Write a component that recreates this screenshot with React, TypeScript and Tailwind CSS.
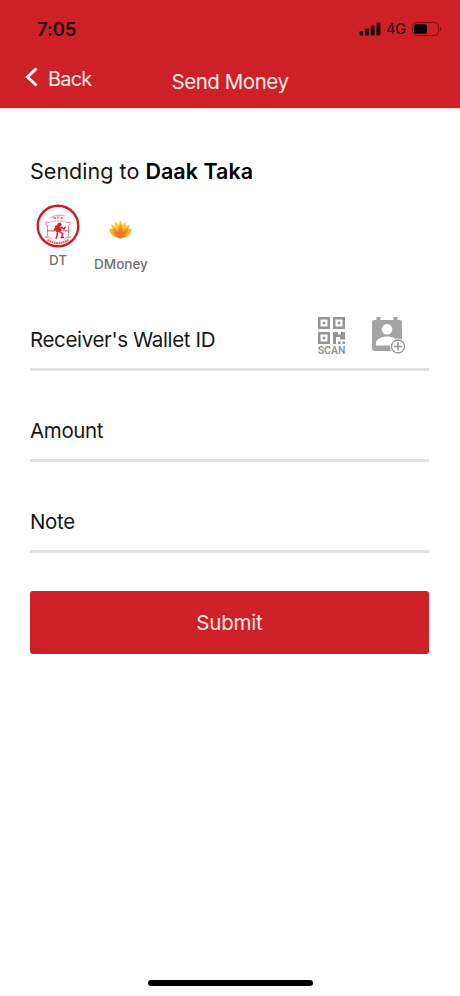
import type { ReactNode } from "react";

function StatusBar() {
  return (
    <div className="flex h-[57px] items-center pr-[18px] pl-[37px] text-[#240406]">
      <span className="text-[18.5px] leading-6 font-semibold tracking-[-0.1px]">7:05</span>
      <svg className="ml-auto" width="22" height="14" viewBox="0 0 22 14" fill="currentColor">
        <rect x="0.5" y="9" width="3.8" height="4.5" rx="1" />
        <rect x="6" y="6.5" width="4" height="7" rx="1" />
        <rect x="11.7" y="3.5" width="4" height="10" rx="1" />
        <rect x="17.4" y="0.5" width="4" height="13" rx="1" />
      </svg>
      <span className="ml-[5px] text-[14.5px] leading-6 tracking-[-0.1px]">4G</span>
      <svg className="ml-[6px]" width="30" height="14" viewBox="0 0 30 14">
        <rect x="0.5" y="0.5" width="26" height="13" rx="4" fill="none" stroke="#7d1014" />
        <rect x="2" y="2.2" width="13" height="9.6" rx="2" fill="#0d0001" />
        <path d="M28 4.8c1.7.8 1.7 3.6 0 4.4z" fill="#7d1014" />
      </svg>
    </div>
  );
}

function DaakTakaLogo() {
  return (
    <svg width="44" height="44" viewBox="0 0 44 44" fill="none" stroke="#d3232b">
      <circle cx="22" cy="22" r="20.3" strokeWidth="2.4" stroke="#c91f2b" />
      <path d="M14.500 14q6-4.500 14.500-2" strokeWidth="1.2" opacity=".4" />
      <path d="M17.500 14h2.500M21 13.500h2.500M24.500 14h2.500" strokeWidth="2" opacity=".55" />
      <path d="M15.500 17.800q6.500-1.500 13 0" strokeWidth="1" strokeDasharray="2 .8" opacity=".55" />
      <path d="M10 17.500v3l1.500 1M34 17.500v3l-1.500 1M10.500 18.500l4-.5M33.500 18.500l-4-.5" strokeWidth="1" opacity=".55" />
      <path d="M11.500 21v11M32.500 21v11M11.500 32l4 3.500M32.500 32l-4 3.500" strokeWidth="1" opacity=".5" />
      <path d="M11 26.800h8M26.500 26.800h6.500" strokeWidth="1.200" opacity=".65" />
      <path d="M9.500 32.500l3 1.500M34.500 32.500l-3 1.500" strokeWidth="1.300" opacity=".6" />
      <path d="M11.500 36q10.500 6 21 0" strokeWidth="2.200" strokeDasharray="1.700 .6" opacity=".75" />
      <circle cx="23.500" cy="20.500" r="2" fill="#d3232b" stroke="none" />
      <path d="M19 22l3-1.300 3.200 2.800.3 3.500-4.300 1.800-2.200-2.800z" fill="#d3232b" stroke="none" />
      <path d="M19.700 23l-1.500 3.500M24.800 23l3.200 2 1.500-2.300M21.700 27.500l-.7 4-1 3M23.800 27.500l3 2.500-1.300 3.500h2.500" strokeWidth="1.500" />
    </svg>
  );
}

function DMoneyLogo() {
  return (
    <svg width="23" height="19" viewBox="0 0 23 19">
      <g fill="#fccb35">
        <path d="M11.500 17C8 10 9.200 3 11.500.5 13.800 3 15 10 11.500 17z" />
        <path d="M11.500 17C5.500 12 5 5 6.500 1.800 10 4 13 10 11.500 17zM11.500 17c6-5 6.500-12 5-15.200C13 4 10 10 11.500 17z" />
        <path d="M11.500 17C4.500 15 2 9 2.300 4.500 7 6 11.500 11 11.500 17zM11.500 17c7-2 9.500-8 9.200-12.500C16 6 11.500 11 11.500 17z" />
      </g>
      <path d="M11.500 18C4.500 18.500 1.200 14 .2 9c4 0 7 .5 9 3h4.600c2-2.500 5-3 9-3-1 5-4.300 9.500-11.300 9z" fill="#fab42a" />
      <path d="M11.500 18.500C5 18 3.500 12 4 7.500c2 .5 3.500 1.500 4.500 3 .3-2.500 1.500-4.500 3-6 1.500 1.500 2.700 3.500 3 6 1-1.500 2.500-2.500 4.500-3 .5 4.500-1 10.500-7.500 11z" fill="#f79824" />
      <path d="M11.500 18.500C7.500 17.500 6 13.500 6.300 10.500c1.500.4 2.500 1.300 3.200 2.300.2-2 .8-3.600 2-5 1.200 1.400 1.800 3 2 5 .7-1 1.700-1.900 3.200-2.300.3 3-1.200 7-5.200 8z" fill="#f27427" />
    </svg>
  );
}

function ScanIcon() {
  return (
    <svg width="27" height="27" viewBox="0 0 27 27" fill="#949494">
      <path fillRule="evenodd" d="M0 0h12v12H0zM2.500 2.500v7h7v-7zM15 0h12v12H15zM17.500 2.500v7h7v-7zM0 15h12v12H0zM2.500 17.500v7h7v-7z" />
      <path d="M4.700 4.700h2.600v2.600H4.700zM19.700 4.700h2.600v2.600h-2.600zM4.700 19.700h2.600v2.600H4.700z" />
      <path d="M15 15h5v2.500h3V15h4v7.500h-5V20h-4v7h-3z" />
      <path d="M20 24.500h2.500V27H20zM24.500 24.500H27V27h-2.500z" />
    </svg>
  );
}

function ContactIcon() {
  return (
    <svg width="34" height="38" viewBox="0 0 34 38">
      <path d="M4.500 0H8.500v3h13V0h4v3h2A2.500 2.500 0 0 1 30 5.500v26a2.500 2.500 0 0 1-2.500 2.500h-25A2.500 2.500 0 0 1 0 31.500v-26A2.500 2.500 0 0 1 2.500 3h2z" fill="#a3a4a6" />
      <circle cx="15" cy="12.200" r="5.300" fill="#fff" />
      <path d="M4 28.500v-2.500c0-4 6-6.500 11-6.500s11 2.500 11 6.500v2.500z" fill="#fff" />
      <circle cx="26" cy="29.500" r="8" fill="#fff" />
      <circle cx="26" cy="29.500" r="6.500" fill="#fff" stroke="#929395" strokeWidth="1.300" />
      <path d="M26 25.500v8M22 29.500h8" stroke="#929395" strokeWidth="1.500" />
    </svg>
  );
}

function Field({ label, children }: { label: string; children?: ReactNode }) {
  return (
    <div className="flex h-[91px] items-end justify-between border-b-[3px] border-[#e2e2e2] pr-[23px] pb-4">
      <span className="text-[20.5px] leading-6 tracking-[-0.36px] text-[#171717]">{label}</span>
      {children}
    </div>
  );
}

export default function App() {
  return (
    <div className="flex h-[996px] w-[460px] flex-col bg-white font-[Inter,sans-serif]">
      <header className="h-[109px] border-b border-[#fbd9dc] bg-[#ce2127] text-[#ffebe9]">
        <StatusBar />
        <nav className="grid grid-cols-[1fr_auto_1fr] items-start px-[25px]">
          <button className="flex items-start pt-[10px]">
            <svg width="13" height="20" viewBox="0 0 13 20" fill="none" stroke="#fff" strokeWidth="3">
              <path d="M11.500 1.500L2.500 10l9 8.500" />
            </svg>
            <span className="ml-[10px] text-[20px] leading-6 tracking-[-0.8px]">Back</span>
          </button>
          <h1 className="pt-[13px] text-[20.5px] leading-6 tracking-[-0.45px]">Send Money</h1>
        </nav>
      </header>

      <main className="pt-[50px] pr-[31px] pl-[30px]">
        <p className="text-[21.5px] leading-6 tracking-[0.03px] text-[#141414]">
          Sending to <b className="font-semibold text-black">Daak Taka</b>
        </p>

        <div className="mt-[21px] flex h-[76px] items-start pl-[6px] text-[#707070]">
          <div className="flex w-[44px] flex-col items-center">
            <DaakTakaLogo />
            <span className="mt-1 text-[13.5px] leading-4 font-medium">DT</span>
          </div>
          <div className="ml-[12px] flex w-[58px] flex-col items-center pt-4">
            <div className="pr-0.5">
              <DMoneyLogo />
            </div>
            <span className="mt-[17px] text-[13.5px] leading-4 font-medium">DMoney</span>
          </div>
        </div>

        <Field label="Receiver's Wallet ID">
          <div className="-mb-[5px] flex items-start gap-[27px]">
            <div className="flex w-[27px] flex-col items-center">
              <ScanIcon />
              <span className="mt-px font-[Roboto,sans-serif] text-[10.5px] leading-3 font-semibold text-[#929292]">SCAN</span>
            </div>
            <ContactIcon />
          </div>
        </Field>
        <Field label="Amount" />
        <Field label="Note" />

        <button className="mt-[38px] h-[63px] w-full rounded-[3px] bg-[#ce2127] text-[20.5px] leading-6 tracking-[-0.2px] text-[#ffe4e0]">
          Submit
        </button>
      </main>

      <div className="mx-auto mt-auto mb-[10px] h-[6px] w-[165px] rounded-full bg-black" />
    </div>
  );
}
